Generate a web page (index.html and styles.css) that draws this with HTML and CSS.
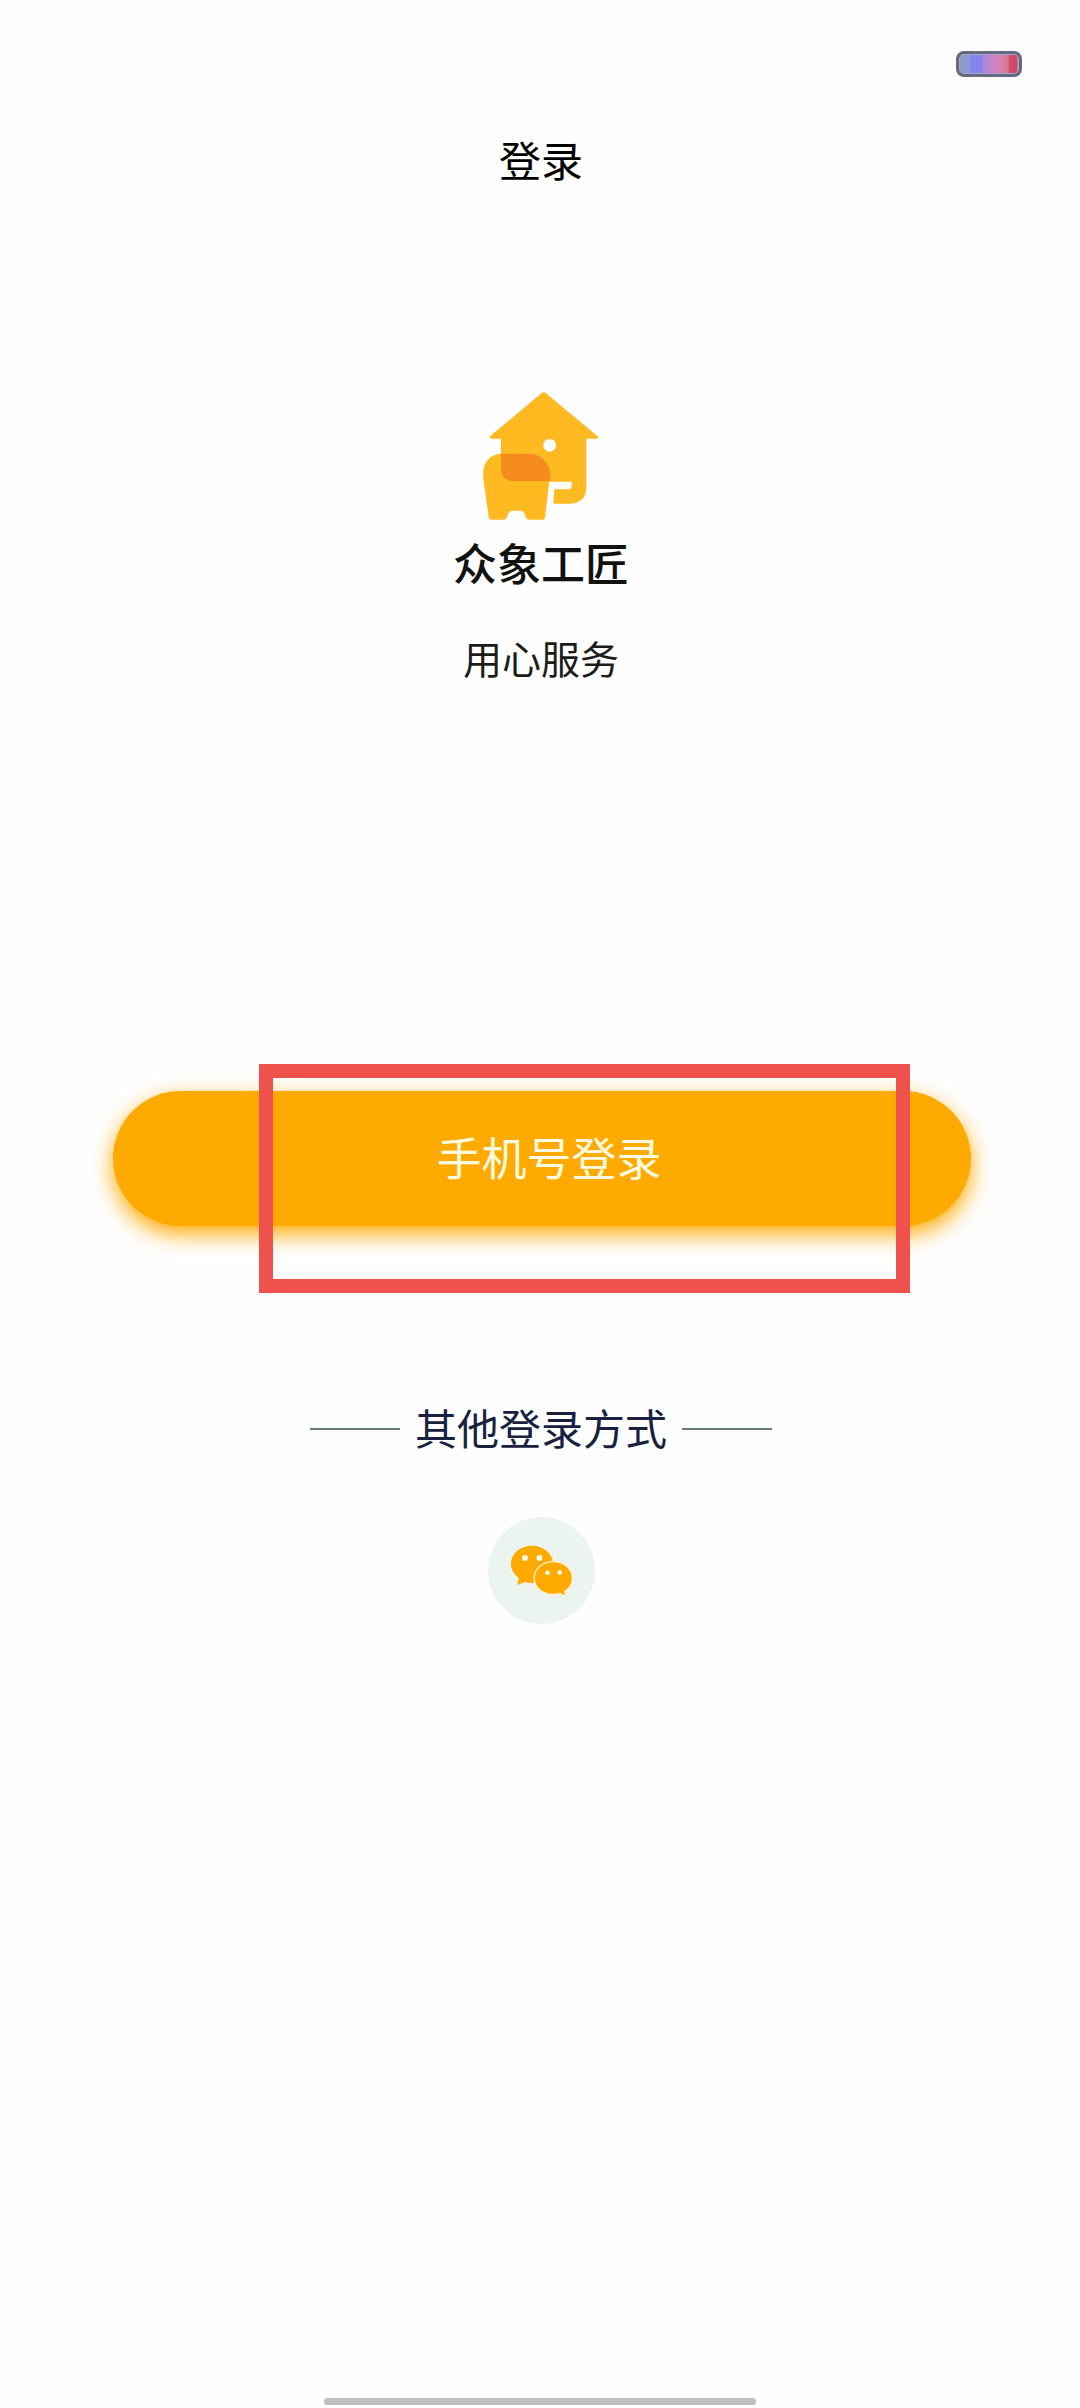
FILE: index.html
```html
<!DOCTYPE html>
<html lang="zh-CN">
<head>
<meta charset="utf-8">
<meta name="viewport" content="width=device-width, initial-scale=1">
<title>登录</title>
<link rel="stylesheet" href="styles.css">
</head>
<body>
<div class="screen">
  <div class="status-bar"><span class="battery"></span></div>
  <header class="header"><h1 class="title">登录</h1></header>
  <main class="content">
    <section class="brand">
      <svg class="brand-mark" viewBox="160 62 354 390" aria-hidden="true">
        <path fill="#ffba22" d="M339 68Q345 63 351 68L507 198Q512 205 502 205H473V354Q470 398 426 400H374L377 357H420Q429 357 429 347V334H362L349 442Q348 448 340 448H302Q294 448 291 439L287 429Q284 421 275 421H250Q243 421 240 428L235 440Q232 448 224 448H188Q181 448 180 440L164 325C160 278 181 252 217 250V205H190Q179 203 186 196Z"/>
        <path fill="#f68c1e" d="M217 250H301C343 252 367 281 366 332H249Q217 329 217 294Z"/>
        <circle cx="363" cy="225" r="19" fill="#fff"/>
      </svg>
      <strong class="brand-name">众象工匠</strong>
      <p class="slogan">用心服务</p>
    </section>
    <div class="login">
      <button class="login-button" type="button">手机号登录</button>
      <span class="highlight"></span>
    </div>
    <section class="other">
      <h2 class="other-title">其他登录方式</h2>
      <button class="wechat" type="button" aria-label="微信登录">
        <svg class="wechat-icon" viewBox="660 492 190 158" aria-hidden="true">
          <path fill="#fa0" d="M726 496C691 496 663 520 663 551C663 569 672 583 686 594L682 615L705 606Q717 610 731 608C765 608 790 582 790 551C790 520 761 496 726 496Z"/>
          <path fill="#fa0" stroke="#fff3c8" stroke-width="4" d="M790 544C758 544 733 566 733 594C733 622 758 643 790 643Q802 643 811 640L830 650L825 634C840 625 848 611 848 594C848 566 822 544 790 544Z"/>
          <g fill="#fffbe8"><circle cx="705" cy="533" r="9"/><circle cx="749" cy="533" r="9"/><circle cx="773" cy="578" r="7"/><circle cx="810" cy="577" r="7"/></g>
        </svg>
      </button>
    </section>
  </main>
  <div class="home-indicator"></div>
</div>
</body>
</html>
```
FILE: styles.css
```css
* { box-sizing: border-box; }

body {
  margin: 0;
  background: #fefefe;
  color: #1c1c1c;
  font-family: "Noto Sans CJK SC", sans-serif;
}

h1, h2, p { margin: 0; font-weight: 400; }
button { border: 0; padding: 0; font-family: inherit; cursor: pointer; }
svg { display: block; }

.screen {
  display: flex;
  flex-direction: column;
  min-height: 100vh;
}

.status-bar {
  display: flex;
  justify-content: flex-end;
  padding: 51px 58px 0;
}

.battery {
  width: 66px;
  height: 26px;
  border: 3px solid #646b80;
  border-radius: 8px;
  background: linear-gradient(90deg, #8d9ad0 0 16%, #8584ec 20% 36%, #a886e0 42%, #c583d0 52%, #d384b8 66%, #d97b91 80%, #d0496b 86% 96%, #b595ae 98%);
  box-shadow: inset 0 0 0 1px #aaa6c2;
}

.header {
  padding: 52px 0 0 2px;
  text-align: center;
}

.title {
  color: #000;
  font-size: 42px;
  line-height: 60px;
}

.content {
  display: flex;
  flex: 1;
  flex-direction: column;
}

.brand {
  display: flex;
  flex-direction: column;
  align-items: center;
  padding: 202px 0 0 2px;
}

.brand-mark { width: 118px; height: 130px; }

.brand-name {
  margin-top: 11px;
  color: #111;
  font-size: 44px;
  font-weight: 500;
  line-height: 60px;
}

.slogan {
  margin-top: 35px;
  font-size: 39px;
  line-height: 60px;
}

.login {
  position: relative;
  margin: 404px 109px 0 113px;
}

.login-button {
  display: block;
  width: 100%;
  height: 135px;
  padding: 0 0 4px 14px;
  border-radius: 68px;
  background: #fa0;
  box-shadow: 0 8px 22px #fa0;
  color: #fffbe0;
  font-size: 45px;
  line-height: 60px;
}

/* Tutorial frame that points out the login button */
.highlight {
  position: absolute;
  top: -27px;
  right: 61px;
  bottom: -67px;
  left: 17%;
  border: 14px solid #ef524c;
  pointer-events: none;
}

.other {
  display: flex;
  flex-direction: column;
  align-items: center;
  gap: 60px;
  padding: 171px 0 0 2px;
}

.other-title {
  display: flex;
  align-items: center;
  gap: 15px;
  color: #18213f;
  font-size: 42px;
  line-height: 60px;
}

.other-title::before,
.other-title::after {
  width: 90px;
  height: 2px;
  margin-top: 4px;
  background: #687d74;
  content: "";
}

.wechat {
  display: grid;
  width: 107px;
  height: 107px;
  place-items: center;
  border-radius: 50%;
  background: #ecf4ef;
}

.wechat-icon { width: 63px; height: 53px; }

.home-indicator {
  width: 40%;
  height: 7px;
  margin: 0 auto 3px;
  border-radius: 4px;
  background: #c0c0c0;
}
```
